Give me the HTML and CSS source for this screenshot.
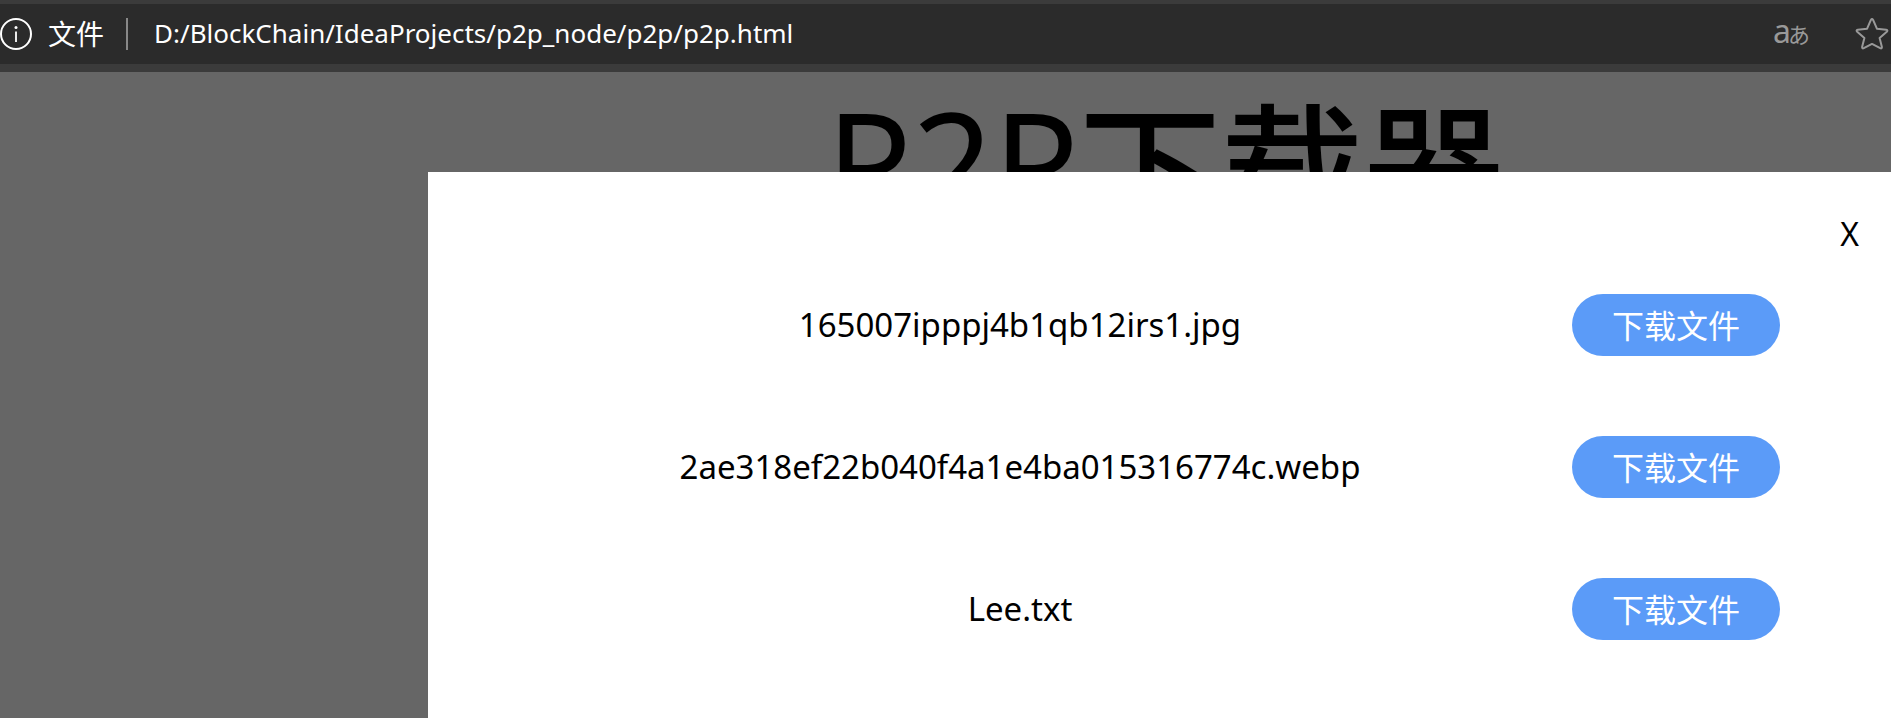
FILE: index.html
```html
<!DOCTYPE html>
<html lang="zh-CN">
<head>
<meta charset="utf-8">
<title>P2P下载器</title>
<link rel="stylesheet" href="styles.css">
</head>
<body>
<header class="address-bar">
  <button class="icon-button" type="button" aria-label="查看站点信息">
    <svg width="32" height="32" viewBox="0 0 32 32" fill="none" stroke="#fff" stroke-width="2"><circle cx="16" cy="16" r="15"/><path d="M16 13.500V24" stroke-width="1.800"/><circle cx="16" cy="9.500" r="1.500" fill="#fff" stroke="none"/></svg>
  </button>
  <span class="scheme">文件</span>
  <span class="divider"></span>
  <span class="url">D:/BlockChain/IdeaProjects/p2p_node/p2p/p2p.html</span>
  <button class="translate" type="button" aria-label="翻译"><span class="latin">a</span><span class="kana">あ</span></button>
  <button class="icon-button" type="button" aria-label="收藏">
    <svg width="34" height="34" viewBox="0 0 34 34" fill="none" stroke="#999" stroke-width="2" stroke-linejoin="round"><path d="M15.900 2.900Q17 1.100 18.100 2.900L21.900 11.700L31.200 12.700Q33.300 13.200 31.800 14.700L24.600 20.900L26.900 30Q27 32 25.200 31.200L17 26.900L8.800 31.200Q7 32 7.100 30L9.400 20.900L2.200 14.700Q.700 13.200 2.800 12.700L12.100 11.700Z"/></svg>
  </button>
</header>
<main class="page">
  <h1 class="title"><span class="title-latin">P2P</span><span class="title-han">下载器</span></h1>
  <section class="modal" role="dialog" aria-label="文件列表">
    <div class="modal-head"><button class="close" type="button">X</button></div>
    <ul class="files">
      <li class="file"><span class="name">165007ipppj4b1qb12irs1.jpg</span><button class="download" type="button">下载文件</button></li>
      <li class="file"><span class="name">2ae318ef22b040f4a1e4ba015316774c.webp</span><button class="download" type="button">下载文件</button></li>
      <li class="file"><span class="name">Lee.txt</span><button class="download" type="button">下载文件</button></li>
    </ul>
  </section>
</main>
</body>
</html>
```
FILE: styles.css
```css
* { box-sizing: border-box; }

body {
  margin: 0;
  min-height: 100vh;
  display: flex;
  flex-direction: column;
  background: #666;
  color: #000;
  font-family: "Noto Sans", "Noto Sans CJK SC", sans-serif;
  font-size: 32px;
}

button {
  padding: 0;
  border: 0;
  background: none;
  color: inherit;
  font: inherit;
  cursor: pointer;
}

.address-bar {
  display: flex;
  align-items: center;
  height: 72px;
  padding-right: 2px;
  border-top: 4px solid #3b3b3b;
  border-bottom: 8px solid #3b3b3b;
  background: #2b2b2b;
  color: #fff;
  font-size: 26px;
  line-height: 40px;
}

.icon-button { display: flex; }

.scheme {
  margin-left: 16px;
  font-size: 28px;
}

.divider {
  width: 2px;
  height: 32px;
  margin: 0 26px 0 22px;
  background: #888;
}

.url { flex: 1; padding-bottom: 2px; }

.translate {
  display: flex;
  align-items: baseline;
  margin-right: 45px;
  padding-bottom: 4px;
  color: #999;
}

.latin { font-size: 32px; }

.kana {
  margin-left: -3px;
  font-family: "Noto Sans CJK JP", sans-serif;
  font-size: 22px;
}

.page {
  position: relative;
  flex: 1;
  overflow: hidden;
}

.title {
  display: flex;
  justify-content: center;
  align-items: flex-start;
  margin: 0;
  padding-left: 440px;
  font-size: 142px;
  font-weight: 400;
  white-space: nowrap;
}

.title-latin { line-height: 178px; }

.title-han {
  font-family: "Noto Sans CJK SC", sans-serif;
  font-weight: 500;
  line-height: 180px;
}

.modal {
  position: absolute;
  inset: 100px 0 0 428px;
  padding: 38px 32px 0 40px;
  background: #fff;
}

.modal-head {
  display: flex;
  justify-content: flex-end;
  line-height: 48px;
}

.files {
  display: grid;
  gap: 80px;
  margin: 36px 79px 0 0;
  padding: 0;
  list-style: none;
}

.file {
  display: grid;
  grid-template-columns: 1fr 208px;
  align-items: center;
}

.name {
  font-size: 33px;
  line-height: 60px;
  text-align: center;
}

.download {
  height: 62px;
  padding-bottom: 2px;
  border-radius: 31px;
  background: #5b9bf8;
  color: #fff;
}
```
